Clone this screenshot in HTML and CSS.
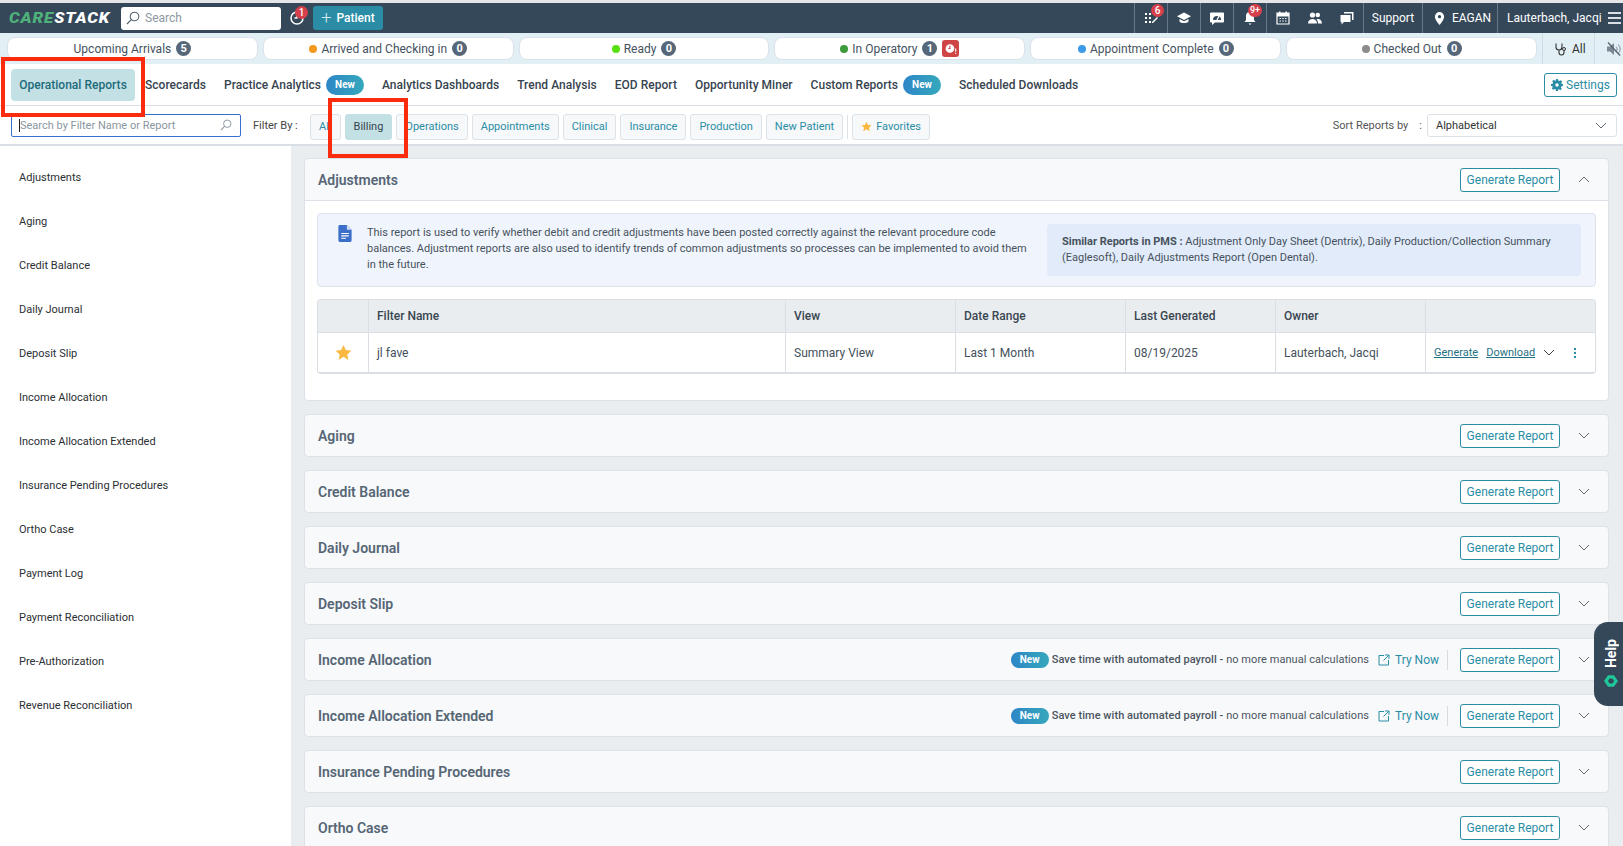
FILE: index.html
```html
<!DOCTYPE html>
<html lang="en">
<head>
<meta charset="utf-8">
<title>Operational Reports</title>
<link rel="stylesheet" href="styles.css">
</head>
<body>
<svg class="sprite" aria-hidden="true">
  <symbol id="chev" viewBox="0 0 12 7"><path d="M1 1l5 5 5-5" fill="none" stroke="currentColor" stroke-width="1"/></symbol>
  <symbol id="chevup" viewBox="0 0 12 7"><path d="M1 6l5-5 5 5" fill="none" stroke="currentColor" stroke-width="1"/></symbol>
  <symbol id="ext" viewBox="0 0 12 12"><path d="M6 1.500H1v9.500h9.500V6M7 1h4v4M11 1L5.500 6.500" fill="none" stroke="currentColor" stroke-width="1"/></symbol>
  <symbol id="mag" viewBox="0 0 14 14"><circle cx="8.500" cy="5.500" r="4.300" fill="none" stroke="currentColor" stroke-width="1.100"/><path d="M5.300 8.700L1 13" stroke="currentColor" stroke-width="1.200"/></symbol>
  <symbol id="star" viewBox="0 0 24 24"><path d="M12 1.500l3.300 7 7.700 1-5.600 5.300 1.400 7.700L12 18l-6.800 4.500 1.400-7.700L1 9.500l7.700-1z" fill="#f9b83f"/></symbol>
</svg>

<header class="topbar">
  <div class="logo"><div class="logo-text"><span class="logo-care">CARE</span><span class="logo-stack">STACK</span></div></div>
  <div class="top-search"><svg class="ic-14"><use href="#mag"/></svg><span>Search</span></div>
  <div class="clock">
    <svg class="ic-16" viewBox="0 0 16 16"><path d="M8 2a6 6 0 1 0 6 6" fill="none" stroke="#fff" stroke-width="1.500"/><path d="M8 4.500V8H5.500" fill="none" stroke="#fff" stroke-width="1.300"/></svg>
    <span class="badge badge-clock">1</span>
  </div>
  <button class="add-patient"><span class="plus">+</span>Patient</button>
  <div class="top-right">
    <div class="tool">
      <svg class="ic-16" viewBox="0 0 16 16"><path d="M2 3h2v2H2zM6 3h2v2H6zM2 7h2v2H2zM6 7h2v2H6zM2 11h2v2H2zM6 11h2v2H6z" fill="#fff"/><path d="M9 12l5-5 1 1-5 5H9z" fill="#fff"/></svg>
      <span class="badge badge-task">6</span>
    </div>
    <div class="tool">
      <svg class="ic-16" viewBox="0 0 16 16"><path d="M8 2.500L1 6.300 8 10l7-3.700z" fill="#fff"/><path d="M3.500 9v2.500C5 13.500 11 13.500 12.500 11.500V9L8 11.300z" fill="#fff"/></svg>
    </div>
    <div class="tool">
      <svg class="ic-16" viewBox="0 0 16 16"><path d="M2 2.500h12a1 1 0 0 1 1 1v8a1 1 0 0 1-1 1H6l-3 2.500v-2.500H2a1 1 0 0 1-1-1v-8a1 1 0 0 1 1-1z" fill="#fff"/><path d="M4 10a4 4 0 1 1 8 0z" fill="#34495a"/><path d="M8 10l2-4" stroke="#fff" stroke-width="1.200"/></svg>
    </div>
    <div class="tool">
      <svg class="ic-16" viewBox="0 0 16 16"><path d="M8 2a4 4 0 0 1 4 4v4l1.500 2h-11L4 10V6a4 4 0 0 1 4-4z" fill="#fff"/><path d="M6.500 13.500h3L8 15z" fill="#fff"/></svg>
      <span class="badge badge-bell">9+</span>
    </div>
    <div class="tool">
      <svg class="ic-16" viewBox="0 0 16 16"><path d="M2 3h12v11H2z" fill="none" stroke="#fff" stroke-width="1.200"/><path d="M2 3h12v3.500H2zM4 1.500h1.500V4H4zM10.500 1.500H12V4h-1.500z" fill="#fff"/><path d="M4.500 8.500h1.500M7.300 8.500h1.500M10 8.500h1.500M4.500 11h1.500M7.300 11h1.500M10 11h1.500" stroke="#fff" stroke-width="1.100"/></svg>
    </div>
    <div class="tool tool-plain">
      <svg class="ic-16" viewBox="0 0 16 16"><circle cx="5.500" cy="5" r="2.600" fill="#fff"/><circle cx="10.800" cy="5" r="2.300" fill="#fff"/><path d="M1 13.500c0-6 9-6 9 0zM11 13.500c0-2-.6-3.400-1.500-4.300 3-.9 5.500 1 5.500 4.300z" fill="#fff"/></svg>
    </div>
    <div class="tool tool-plain">
      <svg class="ic-16" viewBox="0 0 16 16"><path d="M5 2h9.500v8H13V3.500H5z" fill="#fff"/><path d="M1.500 5H11.500v7H5l-2.500 2.500V12h-1z" fill="#fff"/></svg>
    </div>
    <div class="top-text support">Support</div>
    <div class="top-text location">
      <svg class="ic-pin" viewBox="0 0 12 16"><path d="M6 1a5 5 0 0 1 5 5c0 3.500-5 9-5 9S1 9.500 1 6a5 5 0 0 1 5-5z" fill="#fff"/><circle cx="6" cy="6" r="1.800" fill="#34495a"/></svg>
      <span>EAGAN</span>
    </div>
    <div class="top-text user">
      <span>Lauterbach, Jacqi</span>
      <span class="burger"><i></i><i></i><i></i></span>
    </div>
  </div>
</header>

<section class="statusbar">
  <div class="status-cards">
    <div class="status-card"><span>Upcoming Arrivals</span><span class="count">5</span></div>
    <div class="status-card"><i class="dot dot-orange"></i><span>Arrived and Checking in</span><span class="count">0</span></div>
    <div class="status-card"><i class="dot dot-lime"></i><span>Ready</span><span class="count">0</span></div>
    <div class="status-card"><i class="dot dot-green"></i><span>In Operatory</span><span class="count">1</span>
      <span class="alarm"><svg viewBox="0 0 12 12"><circle cx="5.500" cy="6" r="4" fill="#fff"/><path d="M5.500 3.500V6H4" stroke="#cf4545" fill="none"/><path d="M10.800 6v3M10.800 10v1" stroke="#fff"/></svg></span>
    </div>
    <div class="status-card"><i class="dot dot-blue"></i><span>Appointment Complete</span><span class="count">0</span></div>
    <div class="status-card"><i class="dot dot-grey"></i><span>Checked Out</span><span class="count">0</span></div>
  </div>
  <div class="status-all">
    <svg class="ic-14 steth" viewBox="0 0 14 14"><path d="M2 1.500v3.500a3 3 0 0 0 6 0V1.500M5 8v2.500a2.500 2.500 0 0 0 5 0V8.500" fill="none" stroke="#333" stroke-width="1.100"/><circle cx="10" cy="7" r="1.500" fill="none" stroke="#333"/></svg>
    <span>All</span>
  </div>
  <div class="status-mute">
    <svg class="ic-16" viewBox="0 0 16 16"><path d="M1 5.500h3L8 2v12l-4-3.500H1z" fill="#7d8994"/><path d="M10 5.500c1.500 1.200 1.500 3.800 0 5M12 3.500c2.800 2 2.800 7 0 9" fill="none" stroke="#7d8994"/><path d="M2 1.500l12 13" stroke="#56646f" stroke-width="1.300"/></svg>
  </div>
</section>

<nav class="tabs">
  <a class="tab tab-active">Operational Reports</a>
  <a class="tab tab-score">Scorecards</a>
  <a class="tab">Practice Analytics<span class="new">New</span></a>
  <a class="tab">Analytics Dashboards</a>
  <a class="tab">Trend Analysis</a>
  <a class="tab">EOD Report</a>
  <a class="tab">Opportunity Miner</a>
  <a class="tab">Custom Reports<span class="new">New</span></a>
  <a class="tab">Scheduled Downloads</a>
  <button class="settings">
    <svg class="ic-12" viewBox="0 0 12 12"><path d="M5 0h2l.3 1.600 1.100.5L9.800 1.200l1.400 1.400-.9 1.400.5 1.100L12 5v2l-1.600.3-.5 1.100.9 1.400-1.400 1.400-1.400-.9-1.100.5L7 12H5l-.3-1.600-1.100-.5-1.400.9L.8 9.400l.9-1.400-.5-1.100L0 7V5l1.600-.3.5-1.100-.9-1.400L2.600.8l1.400.9 1.100-.5z" fill="#2a8da5"/><circle cx="6" cy="6" r="1.700" fill="#fff"/></svg>
    Settings
  </button>
</nav>

<section class="filters">
  <div class="report-search">
    <span class="caret"></span><span class="placeholder">Search by Filter Name or Report</span>
    <svg class="ic-12 search-ic"><use href="#mag"/></svg>
  </div>
  <span class="filter-label">Filter By :</span>
  <div class="chips">
    <button class="chip">All</button>
    <button class="chip chip-active">Billing</button>
    <button class="chip">Operations</button>
    <button class="chip">Appointments</button>
    <button class="chip">Clinical</button>
    <button class="chip">Insurance</button>
    <button class="chip">Production</button>
    <button class="chip">New Patient</button>
    <span class="chip-divider"></span>
    <button class="chip"><svg class="ic-11"><use href="#star"/></svg>Favorites</button>
  </div>
  <div class="sort">
    <span class="sort-label">Sort Reports by</span>
    <span class="sort-colon">:</span>
    <div class="sort-select"><span>Alphabetical</span><svg class="ic-chev"><use href="#chev"/></svg></div>
  </div>
</section>

<div class="workspace">
  <aside class="sidebar">
    <a>Adjustments</a>
    <a>Aging</a>
    <a>Credit Balance</a>
    <a>Daily Journal</a>
    <a>Deposit Slip</a>
    <a>Income Allocation</a>
    <a>Income Allocation Extended</a>
    <a>Insurance Pending Procedures</a>
    <a>Ortho Case</a>
    <a>Payment Log</a>
    <a>Payment Reconciliation</a>
    <a>Pre-Authorization</a>
    <a>Revenue Reconciliation</a>
  </aside>
  <main class="reports">
    <article class="panel">
      <div class="panel-head panel-head-open">
        <h2>Adjustments</h2>
        <button class="generate">Generate Report</button>
        <svg class="ic-chev panel-chev"><use href="#chevup"/></svg>
      </div>
      <div class="panel-body">
        <div class="info">
          <svg class="doc" viewBox="0 0 14 18"><path d="M1.500 0H9l5 5v11.500a1.500 1.500 0 0 1-1.500 1.500h-11A1.500 1.500 0 0 1 0 16.500v-15A1.500 1.500 0 0 1 1.500 0z" fill="#3b6fc9"/><path d="M9 0v5h5z" fill="#cfdcf3"/><path d="M3 9h8M3 11.500h8M3 14h5" stroke="#fff" stroke-width="1.200"/></svg>
          <p class="info-text">This report is used to verify whether debit and credit adjustments have been posted correctly against the relevant procedure code balances. Adjustment reports are also used to identify trends of common adjustments so processes can be implemented to avoid them in the future.</p>
          <p class="similar"><b>Similar Reports in PMS :</b> Adjustment Only Day Sheet (Dentrix), Daily Production/Collection Summary (Eaglesoft), Daily Adjustments Report (Open Dental).</p>
        </div>
        <div class="filter-table">
          <div class="cell cell-head"></div>
          <div class="cell cell-head">Filter Name</div>
          <div class="cell cell-head">View</div>
          <div class="cell cell-head">Date Range</div>
          <div class="cell cell-head">Last Generated</div>
          <div class="cell cell-head">Owner</div>
          <div class="cell cell-head"></div>
          <div class="cell cell-star"><svg class="ic-star"><use href="#star"/></svg></div>
          <div class="cell">jl fave</div>
          <div class="cell">Summary View</div>
          <div class="cell">Last 1 Month</div>
          <div class="cell">08/19/2025</div>
          <div class="cell">Lauterbach, Jacqi</div>
          <div class="cell cell-actions">
            <a>Generate</a><a>Download</a>
            <svg class="ic-chev row-chev"><use href="#chev"/></svg>
            <span class="kebab"><i></i><i></i><i></i></span>
          </div>
        </div>
      </div>
    </article>

    <article class="panel"><div class="panel-head"><h2>Aging</h2><button class="generate">Generate Report</button><svg class="ic-chev panel-chev"><use href="#chev"/></svg></div></article>
    <article class="panel"><div class="panel-head"><h2>Credit Balance</h2><button class="generate">Generate Report</button><svg class="ic-chev panel-chev"><use href="#chev"/></svg></div></article>
    <article class="panel"><div class="panel-head"><h2>Daily Journal</h2><button class="generate">Generate Report</button><svg class="ic-chev panel-chev"><use href="#chev"/></svg></div></article>
    <article class="panel"><div class="panel-head"><h2>Deposit Slip</h2><button class="generate">Generate Report</button><svg class="ic-chev panel-chev"><use href="#chev"/></svg></div></article>
    <article class="panel"><div class="panel-head"><h2>Income Allocation</h2>
      <div class="promo"><span class="new new-small">New</span><span class="promo-text"><b>Save time with automated payroll -</b> no more manual calculations</span><a class="try"><svg class="ic-12"><use href="#ext"/></svg>Try Now</a></div>
      <button class="generate">Generate Report</button><svg class="ic-chev panel-chev"><use href="#chev"/></svg></div></article>
    <article class="panel"><div class="panel-head"><h2>Income Allocation Extended</h2>
      <div class="promo"><span class="new new-small">New</span><span class="promo-text"><b>Save time with automated payroll -</b> no more manual calculations</span><a class="try"><svg class="ic-12"><use href="#ext"/></svg>Try Now</a></div>
      <button class="generate">Generate Report</button><svg class="ic-chev panel-chev"><use href="#chev"/></svg></div></article>
    <article class="panel"><div class="panel-head"><h2>Insurance Pending Procedures</h2><button class="generate">Generate Report</button><svg class="ic-chev panel-chev"><use href="#chev"/></svg></div></article>
    <article class="panel"><div class="panel-head"><h2>Ortho Case</h2><button class="generate">Generate Report</button><svg class="ic-chev panel-chev"><use href="#chev"/></svg></div></article>
  </main>
</div>

<aside class="help">
  <span class="help-text">Help</span>
  <svg class="help-ic" viewBox="0 0 12 12"><path d="M3.500 1h5L12 6l-3.500 5h-5L0 6z" fill="#1fc79a"/><path d="M4.800 3.800h2.400L8.700 6 7.200 8.200H4.800L3.300 6z" fill="#34495a"/></svg>
</aside>

<div class="mark mark-tab"></div>
<div class="mark mark-chip"></div>
</body>
</html>
```

FILE: styles.css
```css
* { box-sizing: border-box; }
html, body { margin: 0; height: 100%; }
body {
  position: relative;
  height: 846px;
  overflow: hidden;
  padding-top: 3px;
  background: #e4e6e8;
  font-family: Roboto, "Liberation Sans", sans-serif;
  font-size: 11px;
  color: #333;
  display: flex;
  flex-direction: column;
}
button { font-family: inherit; cursor: pointer; }
p, h2 { margin: 0; }
.sprite { display: none; }
.ic-11 { width: 11px; height: 11px; flex: none; }
.ic-12 { width: 12px; height: 12px; flex: none; }
.ic-14 { width: 14px; height: 14px; flex: none; }
.ic-16 { width: 16px; height: 16px; flex: none; }
.ic-chev { width: 12px; height: 7px; flex: none; color: #5f6b76; }

/* top bar */
.topbar {
  height: 30px;
  flex: none;
  background: #35485a;
  display: flex;
  align-items: center;
  padding-left: 9px;
  color: #fff;
}
.logo { width: 101px; flex: none; }
.logo-text {
  display: inline-block;
  font: italic 900 15px Roboto, sans-serif;
  letter-spacing: .8px;
  white-space: nowrap;
  transform: scaleX(1.12);
  transform-origin: left center;
}
.logo-care { color: #4fb079; }
.logo-stack { color: #fff; }
.top-search {
  width: 160px;
  height: 23px;
  margin-left: 11px;
  background: #fff;
  border-radius: 3px;
  display: flex;
  align-items: center;
  gap: 5px;
  padding-left: 5px;
  color: #8d99a3;
  font-size: 12px;
}
.top-search svg { color: #55636f; }
.clock { position: relative; margin-left: 8px; width: 24px; height: 24px; display: flex; align-items: center; }
.badge {
  position: absolute;
  background: #d6404a;
  color: #fff;
  border-radius: 8px;
  min-width: 13px;
  height: 13px;
  line-height: 13px;
  text-align: center;
  font-size: 10px;
  font-weight: 500;
}
.badge-clock { top: 0; left: 6px; }
.badge-task { top: 1px; left: 16px; }
.badge-bell { top: 1px; left: 14px; padding: 0 2px; font-size: 9px; }
.add-patient {
  width: 70px;
  height: 24px;
  border: 0;
  border-radius: 3px;
  background: #2a8da5;
  color: #fff;
  font-size: 12px;
  font-weight: 500;
  padding: 0;
  display: flex;
  align-items: center;
  justify-content: center;
  gap: 5px;
}
.plus { font-size: 18px; font-weight: 300; line-height: 12px; color: #d5e8ee; }
.top-right { margin-left: auto; display: flex; height: 100%; }
.tool {
  position: relative;
  width: 33px;
  display: flex;
  align-items: center;
  justify-content: center;
  border-left: 1px solid #66788a;
}
.tool-plain { border-left: 0; width: 32px; }
.top-text {
  display: flex;
  align-items: center;
  font-size: 12px;
  font-weight: 400;
  border-left: 1px solid #66788a;
}
.support { width: 59px; justify-content: center; }
.location { width: 75px; padding-left: 11px; gap: 7px; }
.ic-pin { width: 11px; height: 15px; }
.user { width: 126px; padding-left: 9px; gap: 6px; white-space: nowrap; }
.burger { display: flex; flex-direction: column; gap: 3px; width: 13px; }
.burger i { display: block; height: 2px; background: #d9dfe4; }

/* status */
.statusbar {
  height: 31px;
  flex: none;
  background: #e2eff5;
  display: flex;
  align-items: center;
  padding-left: 7px;
}
.status-cards { width: 1530px; flex: none; display: grid; grid-template-columns: repeat(6, 1fr); gap: 5px; }
.status-card {
  height: 23px;
  background: #fff;
  border: 1px solid #dbe3ea;
  border-radius: 8px;
  display: flex;
  align-items: center;
  justify-content: center;
  gap: 3px;
  font-size: 12px;
  color: #44525e;
}
.dot { width: 8px; height: 8px; border-radius: 50%; margin-right: 1px; }
.dot-orange { background: #f39a1e; }
.dot-lime { background: #57e00f; }
.dot-green { background: #3d9a3d; }
.dot-blue { background: #3d9ae8; }
.dot-grey { background: #8b8b8b; }
.count {
  width: 15px;
  height: 15px;
  margin-left: 2px;
  border-radius: 50%;
  background: #56677a;
  color: #fff;
  font-size: 11px;
  font-weight: 700;
  line-height: 15px;
  text-align: center;
}
.alarm { width: 17px; height: 17px; margin-left: 2px; border-radius: 3px; background: #cf4545; padding: 2px; display: flex; }
.alarm svg { width: 13px; height: 13px; }
.status-all {
  margin-left: 5px;
  width: 53px;
  flex: none;
  height: 100%;
  border-left: 1px solid #cfdbe2;
  border-right: 1px solid #cfdbe2;
  display: flex;
  align-items: center;
  gap: 4px;
  padding-left: 11px;
  font-size: 12px;
  color: #333;
}
.status-mute { padding-left: 11px; display: flex; align-items: center; }

/* tabs */
.tabs {
  height: 42px;
  flex: none;
  background: #fff;
  border-bottom: 1px solid #d9dfe5;
  display: flex;
  align-items: center;
  padding: 0 6px 0 11px;
  gap: 18px;
}
.tab {
  display: flex;
  align-items: center;
  font-size: 12px;
  font-weight: 500;
  color: #37444f;
  white-space: nowrap;
  letter-spacing: .025px;
}
.tab-active {
  height: 32px;
  width: 124px;
  margin-top: 1px;
  justify-content: center;
  background: #c3e0e5;
  border-radius: 4px;
  color: #1e6b7b;
}
.tab-score { margin-left: -8px; }
.new {
  width: 38px;
  height: 20px;
  margin-left: 5px;
  border-radius: 10px;
  background: linear-gradient(90deg, #2e86c6, #35a8bc);
  color: #fff;
  font-size: 10px;
  font-weight: 700;
  line-height: 20px;
  text-align: center;
}
.settings {
  margin-left: auto;
  width: 73px;
  height: 24px;
  background: #fff;
  border: 1px solid #2a8da5;
  border-radius: 3px;
  color: #2a8da5;
  font-size: 12px;
  display: flex;
  align-items: center;
  justify-content: center;
  gap: 3px;
  padding: 0;
}

/* filters */
.filters {
  height: 40px;
  flex: none;
  background: #fff;
  border-bottom: 2px solid #d9dfe5;
  display: flex;
  align-items: center;
  padding: 3px 6px 0 11px;
}
.report-search {
  width: 230px;
  height: 23px;
  border: 1px solid #3a6fd0;
  border-radius: 2px;
  display: flex;
  align-items: center;
  padding: 0 8px 0 7px;
  margin-top: -3px;
  color: #8a96a0;
}
.caret { width: 1px; height: 13px; background: #222; }
.placeholder { flex: 1; }
.search-ic { color: #8a96a0; }
.filter-label { margin-left: 12px; width: 57px; color: #444; margin-top: -3px; }
.chips { display: flex; gap: 4px; align-items: center; height: 26px; }
.chip {
  height: 26px;
  padding: 0 8px;
  background: #f6f8fa;
  border: 1px solid #dbe2e8;
  border-radius: 3px;
  color: #2a8da5;
  font-size: 11px;
  display: flex;
  align-items: center;
  gap: 4px;
}
.chip-active { background: #c3e0e5; border-color: #c3e0e5; color: #37444f; }
.chip-divider { width: 1px; height: 24px; background: #dbe2e8; }
.sort { margin-left: auto; display: flex; align-items: center; margin-top: -3px; }
.sort-label { color: #555; }
.sort-colon { margin: 0 5px 0 11px; color: #555; }
.sort-select {
  width: 190px;
  height: 23px;
  border: 1px solid #dbe2e8;
  border-radius: 3px;
  display: flex;
  align-items: center;
  justify-content: space-between;
  padding: 0 9px 0 8px;
  color: #333;
}

/* workspace */
.workspace { flex: 1; min-height: 0; display: flex; background: #e9edf0; }
.sidebar {
  width: 291px;
  flex: none;
  background: #fff;
  padding: 10px 0 0 19px;
  display: flex;
  flex-direction: column;
}
.sidebar a { height: 44px; line-height: 44px; color: #2b2f33; font-size: 11px; }
.reports {
  flex: 1;
  min-width: 0;
  padding: 12px 14px 0 13px;
  display: flex;
  flex-direction: column;
  gap: 13px;
}
.panel {
  flex: none;
  background: #f7f9fb;
  border: 1px solid #dce2e8;
  border-radius: 4px;
}
.panel-head {
  height: 41px;
  display: flex;
  align-items: center;
  padding: 0 18px 0 13px;
}
.panel-head-open { height: 42px; border-bottom: 1px solid #dce2e8; }
.panel-head h2 {
  font-size: 14px;
  font-weight: 600;
  color: #566675;
  margin-right: auto;
}
.generate {
  width: 100px;
  height: 24px;
  background: #fff;
  border: 1px solid #2a8da5;
  border-radius: 3px;
  color: #2a8da5;
  font-size: 12px;
  padding: 0;
}
.panel-chev { margin-left: 18px; }
.promo { display: flex; align-items: center; margin-right: 12px; }
.new-small { height: 16px; line-height: 16px; margin: 0 3px 0 0; }
.promo-text { font-size: 11px; color: #4c555f; font-weight: 400; white-space: nowrap; letter-spacing: .05px; }
.promo-text b { font-weight: 500; }
.try {
  display: flex;
  align-items: center;
  gap: 5px;
  margin-left: 9px;
  padding-right: 8px;
  height: 20px;
  border-right: 1px solid #d5dbe0;
  font-size: 12px;
  color: #2a8da5;
}
.panel-body { background: #fff; padding: 12px 12px 26px; border-radius: 0 0 4px 4px; }
.info {
  height: 74px;
  background: #f0f5fd;
  border: 1px solid #dce3ec;
  border-radius: 4px;
  display: flex;
  align-items: center;
  padding: 0 14px 0 20px;
  color: #47525c;
  line-height: 16px;
}
.doc { width: 14px; height: 17px; flex: none; align-self: flex-start; margin-top: 11px; }
.info-text { width: 665px; margin: -3px 0 0 15px; flex: none; }
.similar {
  margin-left: 15px;
  flex: 1;
  height: 52px;
  padding: 10px 15px;
  background: #e1ebfa;
  border-radius: 4px;
}
.similar b { font-weight: 700; }
.filter-table {
  margin-top: 12px;
  display: grid;
  grid-template-columns: 50px 417px 170px 170px 150px 150px 1fr;
  grid-template-rows: 33px 39px;
  border: 1px solid #d9dfe5;
  border-bottom-width: 2px;
  border-radius: 4px;
  overflow: hidden;
  font-size: 12px;
}
.cell {
  display: flex;
  align-items: center;
  padding-left: 8px;
  border-left: 1px solid #d9dfe5;
  background: #fff;
  color: #44505b;
}
.cell:nth-child(7n+1) { border-left: 0; }
.cell-head {
  background: #eaedf0;
  border-bottom: 1px solid #d9dfe5;
  font-weight: 500;
  color: #3a4651;
}
.cell-star { justify-content: center; padding: 0; }
.ic-star { width: 17px; height: 17px; }
.cell-actions { font-size: 11px; padding-right: 19px; }
.cell-actions a { color: #1f7184; text-decoration: underline; margin-right: 8px; }
.row-chev { color: #444; }
.kebab { margin-left: auto; display: flex; flex-direction: column; gap: 2px; }
.kebab i { width: 2px; height: 2px; background: #2a8da5; display: block; }

/* help */
.help {
  position: absolute;
  right: 0;
  top: 622px;
  width: 29px;
  height: 84px;
  background: #35485a;
  border-radius: 14px 0 0 14px;
  display: flex;
  flex-direction: column;
  align-items: center;
  padding: 17px 0 0 4px;
  gap: 6px;
  color: #fff;
}
.help-text {
  writing-mode: vertical-rl;
  transform: rotate(180deg);
  font-size: 14px;
  font-weight: 700;
}
.help-ic { width: 14px; height: 14px; }

/* annotation boxes */
.mark { position: absolute; border: 4px solid #fb2c0d; pointer-events: none; }
.mark-tab { left: 1px; top: 57px; width: 144px; height: 60px; }
.mark-chip { left: 328px; top: 98px; width: 80px; height: 60px; }
```
